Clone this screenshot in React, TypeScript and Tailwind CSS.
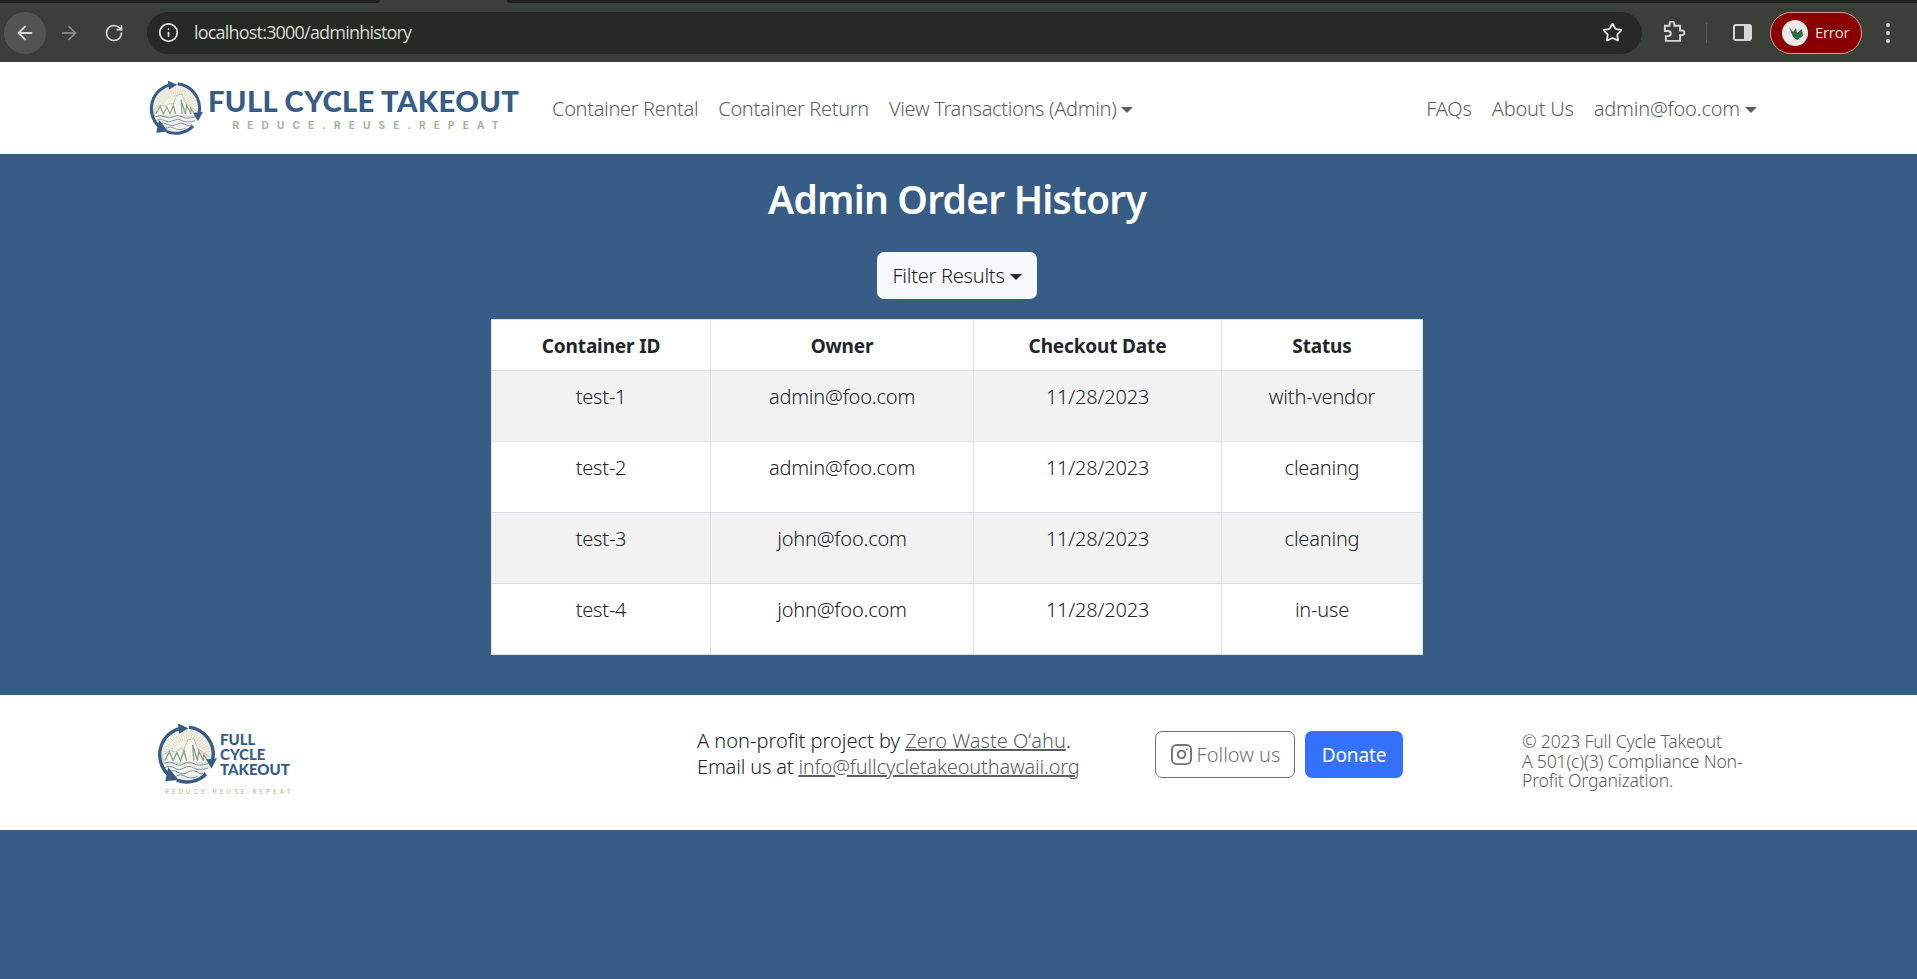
import { ArrowLeft, ArrowRight, RotateCw, Info, Star, Instagram } from "lucide-react";

const font = { fontFamily: '"Noto Sans", "Open Sans", sans-serif' };

function Emblem({ size }: { size: number }) {
  return (
    <svg width={size} height={size} viewBox="0 0 100 100" className="shrink-0">
      <circle cx="50" cy="50" r="42" fill="#f2f1e8" />
      <g stroke="#ddd7be" strokeWidth="1.200">
        {Array.from({ length: 25 }).map((_, i) => {
          const a = Math.PI + (i * Math.PI) / 24;
          return <line key={i} x1={50 + 22 * Math.cos(a)} y1={50 + 22 * Math.sin(a)} x2={50 + 40 * Math.cos(a)} y2={50 + 40 * Math.sin(a)} />;
        })}
      </g>
      <path d="M10 52 L22 44 L32 46 L40 40 L46 42 L52 26 L62 24 L68 40 L76 46 L90 56 L88 64 L12 64 Z" fill="#f6f6f0" stroke="#a8b8a0" strokeWidth="1.200" />
      <path d="M14 60 L22 46 L28 60 L34 47 L40 60 L46 44 L50 60 M62 60 L60 34 L68 60 L70 44 L78 60 L78 50 L85 60" stroke="#8ea38c" strokeWidth="2.200" fill="none" />
      <path d="M14 65 Q22 60 30 65 T46 65 T62 65 T86 65 M14 72 Q22 67 30 72 T46 72 T62 72 T86 72 M20 79 Q28 74 36 79 T52 79 T68 79 T80 79 M32 86 Q40 81 48 86 T68 86" stroke="#5f7896" strokeWidth="1.300" fill="none" />
      <g fill="none" stroke="#375c85" strokeWidth="5.500">
        <path d="M19 82 A45 45 0 0 1 39 7" />
        <path d="M54 5 A45 45 0 0 1 93 58" />
        <path d="M82 82 A45 45 0 0 1 34 92" />
      </g>
      <g fill="#375c85">
        <path d="M36 -1 L53 7 L38 16 Z" />
        <path d="M82 58 L100 56 L91 73 Z" />
        <path d="M20 71 L37 92 L15 94 Z" />
      </g>
    </svg>
  );
}

function Caret() {
  return <span className="ml-[5px] inline-block align-[3px] w-0 h-0 border-x-[6px] border-x-transparent border-t-[6px] border-t-current" />;
}

const rows = [
  ["test-1", "admin@foo.com", "11/28/2023", "with-vendor"],
  ["test-2", "admin@foo.com", "11/28/2023", "cleaning"],
  ["test-3", "john@foo.com", "11/28/2023", "cleaning"],
  ["test-4", "john@foo.com", "11/28/2023", "in-use"],
];

export default function App() {
  return (
    <div className="min-h-[979px] bg-[#375c85] flex flex-col overflow-hidden" style={font}>
      {/* Browser chrome */}
      <div className="h-[62px] bg-[#3a3f38]">
        <div className="h-[3px] flex">
          <div className="w-[380px] bg-[#1e221b] rounded-br-[3px]" />
          <div className="w-[127px]" />
          <div className="flex-1 bg-[#1e221b] rounded-bl-[3px]" />
        </div>
        <div className="h-[59px] bg-[#3a3f38] flex items-center pl-[4px] pr-[14px] text-[#d5d8d2]">
          <div className="w-[42px] h-[42px] rounded-full bg-[#50554e] flex items-center justify-center">
            <ArrowLeft size={22} strokeWidth={2} />
          </div>
          <div className="w-[46px] flex justify-center text-[#81857f]">
            <ArrowRight size={22} strokeWidth={2} />
          </div>
          <div className="w-[44px] flex justify-center">
            <RotateCw size={20} strokeWidth={2} />
          </div>
          <div className="ml-[11px] w-[1495px] h-[42px] rounded-full bg-[#262a22] flex items-center pl-[11px] pr-[19px]">
            <Info size={21} strokeWidth={2} className="text-[#e5e7e2]" />
            <span className="ml-[15px] text-[18px] tracking-[-0.8px] text-[#d8dad5]" style={{ fontFamily: '"Open Sans", sans-serif' }}>localhost:3000/adminhistory</span>
            <Star size={21} strokeWidth={2} className="ml-auto text-[#e5e7e2]" />
          </div>
          <svg width="24" height="24" viewBox="0 0 24 24" fill="none" stroke="#d5d8d2" strokeWidth="2" className="ml-[20px]">
            <path d="M3 6h5V4a2.5 2.5 0 0 1 5 0v2h6v5h2a2.5 2.5 0 0 1 0 5h-2v6H4v-5h2.5a2 2 0 0 0 0-5.500H3z" transform="translate(0 -1) scale(0.95)" />
          </svg>
          <div className="ml-[20px] w-px h-[20px] bg-[#5b605a]" />
          <svg width="20" height="20" viewBox="0 0 20 20" className="ml-[26px]">
            <rect x="1" y="2" width="17" height="15" rx="2" fill="none" stroke="#d5d8d2" strokeWidth="2" />
            <rect x="11" y="2" width="7" height="15" fill="#d5d8d2" />
          </svg>
          <div className="ml-[17px] w-[92px] h-[42px] rounded-full bg-[#8a0000] border border-[#d79a9a] flex items-center pl-[11px]">
            <svg width="26" height="26" viewBox="0 0 26 26" className="shrink-0">
              <circle cx="13" cy="13" r="13" fill="#e8ebe8" />
              <path d="M7 7 L11 12 L14 8 L15 13 L20 9 L21 16 L15 20 L11 17 Z" fill="#2f6b4a" />
            </svg>
            <span className="ml-[7px] text-[15px] tracking-[-0.3px] text-[#f3dede]" style={{ fontFamily: '"Open Sans", sans-serif' }}>Error</span>
          </div>
          <div className="ml-[24px] flex flex-col gap-[4px]">
            <span className="w-[4px] h-[4px] rounded-full bg-[#d5d8d2]" />
            <span className="w-[4px] h-[4px] rounded-full bg-[#d5d8d2]" />
            <span className="w-[4px] h-[4px] rounded-full bg-[#d5d8d2]" />
          </div>
        </div>
      </div>

      {/* Navbar */}
      <nav className="h-[92px] bg-white flex items-center pl-[148px] pr-[160px] text-[20px] text-[#5c5f62]">
        <div className="flex items-center w-[372px] shrink-0">
          <Emblem size={55} />
          <div className="ml-[5px] flex flex-col items-center">
            <span className="text-[29.200px] leading-[32px] font-black tracking-[0.35px] text-[#375c85] whitespace-nowrap" style={{ fontFamily: '"Lato", sans-serif' }}>FULL CYCLE TAKEOUT</span>
            <span className="ml-[12px] mt-[2px] text-[10px] leading-[12px] font-bold tracking-[8.2px] text-[#a3b49c] whitespace-nowrap" style={{ fontFamily: '"Inter", sans-serif' }}>REDUCE.REUSE.REPEAT</span>
          </div>
        </div>
        <div className="ml-[32px] mt-[2px] flex gap-[20px] tracking-[-0.33px] font-light">
          <span>Container Rental</span>
          <span>Container Return</span>
          <span>View Transactions (Admin)<Caret /></span>
        </div>
        <div className="ml-auto mt-[2px] flex gap-[20px] tracking-[-0.2px] font-light">
          <span>FAQs</span>
          <span>About Us</span>
          <span>admin@foo.com<Caret /></span>
        </div>
      </nav>

      {/* Main */}
      <main className="h-[541px] flex flex-col items-center pr-[3px]">
        <h1 className="mt-[20px] text-[39px] leading-[50px] font-semibold text-white tracking-[-0.8px]">Admin Order History</h1>
        <button className="mt-[28px] w-[160px] h-[47px] rounded-[7px] bg-[#f8f9fa] text-[#1f2327] text-[20px] tracking-[-0.25px] font-light whitespace-nowrap">
          Filter Results<Caret />
        </button>
        <table className="mt-[20px] w-[931px] table-fixed border-collapse bg-white text-[19px] text-[#212529] tracking-[-0.15px] text-center">
          <colgroup>
            <col className="w-[219px]" />
            <col className="w-[263px]" />
            <col className="w-[248px]" />
            <col className="w-[201px]" />
          </colgroup>
          <thead>
            <tr className="h-[51px]">
              {["Container ID", "Owner", "Checkout Date", "Status"].map((h) => (
                <th key={h} className="border border-[#dee2e6] font-bold align-middle pt-[2px]">{h}</th>
              ))}
            </tr>
          </thead>
          <tbody>
            {rows.map((r, i) => (
              <tr key={r[0]} className={i % 2 === 0 ? "h-[71px] bg-[#f2f2f2]" : "h-[71px] bg-white"}>
                {r.map((c, j) => (
                  <td key={j} className="border border-[#dee2e6] align-top pt-[13px] leading-[26px] font-light text-[20px] tracking-[-0.2px]">{c}</td>
                ))}
              </tr>
            ))}
          </tbody>
        </table>
      </main>

      {/* Footer */}
      <footer className="h-[135px] bg-white grid grid-cols-[541px_458px_367px_1fr] items-center pl-[156px] text-[20px] leading-[26px] text-[#212529] font-light">
        <div className="flex items-start -mt-[6px]">
          <div className="flex flex-col">
            <div className="flex items-center">
              <Emblem size={61} />
              <div className="ml-[3px] text-[#375c85] font-black text-[15px] leading-[15px]" style={{ fontFamily: '"Lato", sans-serif' }}>
                <div>FULL</div>
                <div>CYCLE</div>
                <div>TAKEOUT</div>
              </div>
            </div>
            <span className="ml-[9px] mt-[3px] text-[6px] leading-[8px] tracking-[3.100px] text-[#a3b49c] whitespace-nowrap font-normal" style={{ fontFamily: '"Inter", sans-serif' }}>REDUCE.REUSE.REPEAT</span>
          </div>
        </div>
        <div className="-mt-[18px] whitespace-nowrap">
          <div>A non-profit project by <a className="underline text-[#5c5f62]">Zero Waste O&#699;ahu</a>.</div>
          <div className="tracking-[-0.17px]">Email us at <a className="underline text-[#5c5f62]">info@fullcycletakeouthawaii.org</a></div>
        </div>
        <div className="flex items-center gap-[10px] -mt-[17px]">
          <div className="w-[140px] h-[47px] pt-[1px] rounded-[7px] border border-[#6c757d] flex items-center justify-center text-[#6c757d] gap-[4px] whitespace-nowrap">
            <Instagram size={23} strokeWidth={2} />
            <span>Follow us</span>
          </div>
          <div className="w-[98px] h-[47px] pt-[1px] rounded-[7px] bg-[#3571ff] flex items-center justify-center text-white font-normal text-[19px] tracking-[-0.15px]">Donate</div>
        </div>
        <div className="-mt-[2px] text-[17.600px] leading-[19.500px] text-[#5c5f62] w-[245px] tracking-[-0.2px]">
          <div>© 2023 Full Cycle Takeout</div>
          <div>A 501(c)(3) Compliance Non-Profit Organization.</div>
        </div>
      </footer>
      <div className="flex-1 bg-[#375c85]" />
    </div>
  );
}
